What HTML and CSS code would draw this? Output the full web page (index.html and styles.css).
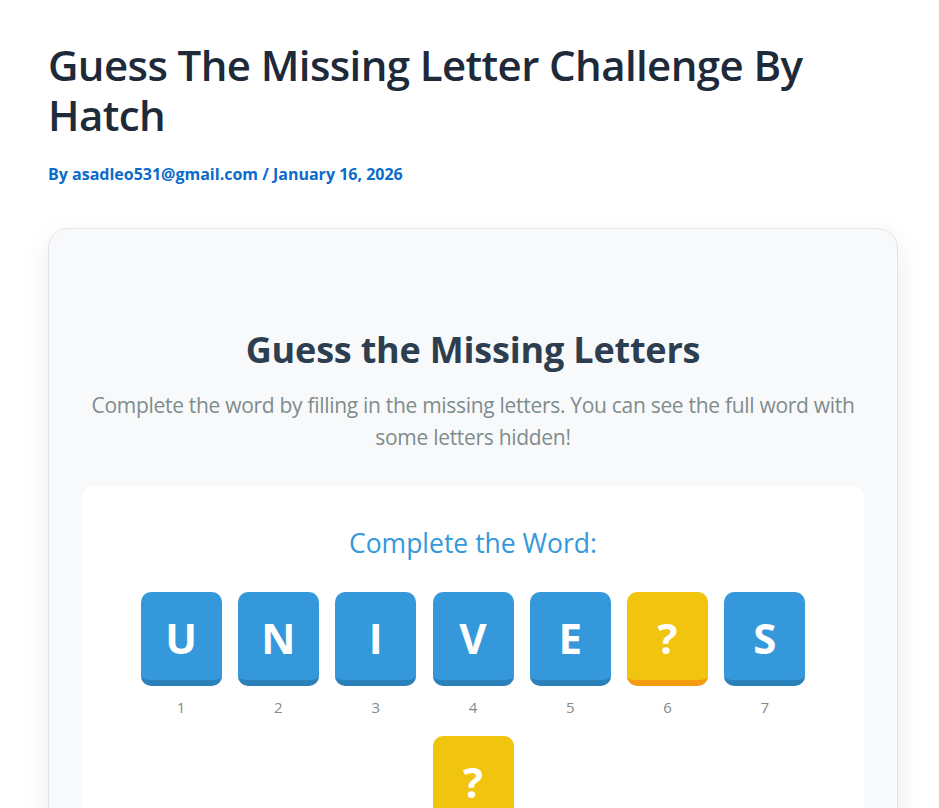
FILE: index.html
```html
<!DOCTYPE html>
<html lang="en">
<head>
<meta charset="utf-8">
<title>Guess The Missing Letter Challenge By Hatch</title>
<link rel="stylesheet" href="styles.css">
</head>
<body>
<main class="page">
  <header class="entry-header">
    <h1 class="entry-title">Guess The Missing Letter Challenge By Hatch</h1>
    <div class="entry-meta">By asadleo531@gmail.com / January 16, 2026</div>
  </header>
  <section class="game-card">
    <h2 class="game-title">Guess the Missing Letters</h2>
    <p class="game-desc">Complete the word by filling in the missing letters. You can see the full word with some letters hidden!</p>
    <div class="word-panel">
      <h3 class="word-label">Complete the Word:</h3>
      <div class="tiles">
        <div class="tile-item"><div class="tile">U</div><span class="tile-num">1</span></div>
        <div class="tile-item"><div class="tile">N</div><span class="tile-num">2</span></div>
        <div class="tile-item"><div class="tile">I</div><span class="tile-num">3</span></div>
        <div class="tile-item"><div class="tile">V</div><span class="tile-num">4</span></div>
        <div class="tile-item"><div class="tile">E</div><span class="tile-num">5</span></div>
        <div class="tile-item"><div class="tile tile-missing">?</div><span class="tile-num">6</span></div>
        <div class="tile-item"><div class="tile">S</div><span class="tile-num">7</span></div>
        <div class="tile-item"><div class="tile tile-missing">?</div><span class="tile-num">8</span></div>
      </div>
    </div>
  </section>
</main>
</body>
</html>
```
FILE: styles.css
```css
* { box-sizing: border-box; }
html, body { margin: 0; padding: 0; background: #ffffff; }
body {
  font-family: "Open Sans", "Noto Sans", sans-serif;
  color: #1e293b;
}
.page {
  padding: 40px 41px 40px 48px;
}
.entry-title {
  margin: 0;
  font-size: 42px;
  line-height: 50px;
  font-weight: 600;
  color: #1e2939;
  letter-spacing: -0.6px;
}
.entry-meta {
  margin-top: 22px;
  font-size: 16px;
  line-height: 24px;
  font-weight: 700;
  color: #0b6bcb;
}
.game-card {
  margin-top: 42px;
  background: #f8f9fa;
  border: 1px solid #e2e4e7;
  border-radius: 20px;
  box-shadow: 0 10px 30px rgba(0, 0, 0, 0.08);
  padding: 99px 33px 40px;
  text-align: center;
}
.game-title {
  margin: 0;
  font-size: 36px;
  line-height: 44px;
  font-weight: 700;
  color: #2c3e50;
  letter-spacing: -0.2px;
}
.game-desc {
  margin: 17px 0 0;
  font-size: 21px;
  line-height: 32px;
  color: #7f8c8d;
  letter-spacing: -0.3px;
}
.word-panel {
  margin-top: 33px;
  background: #ffffff;
  border-radius: 12px;
  padding: 39px 40px 40px;
}
.word-label {
  margin: 0;
  font-size: 26.5px;
  line-height: 36px;
  font-weight: 500;
  color: #3498db;
}
.tiles {
  margin-top: 31px;
  display: flex;
  flex-wrap: wrap;
  justify-content: center;
  column-gap: 16.3px;
  row-gap: 19px;
}
.tile-item {
  display: flex;
  flex-direction: column;
  align-items: center;
  width: 81px;
}
.tile {
  width: 81px;
  height: 94px;
  border-radius: 10px;
  background: #3498db;
  border-bottom: 6px solid #2a80b9;
  color: #ffffff;
  font-size: 42px;
  font-weight: 700;
  display: flex;
  align-items: center;
  justify-content: center;
  padding-top: 3px;
}
.tile-missing {
  background: #f1c40f;
  border-bottom-color: #f39c12;
}
.tile-num {
  margin-top: 11px;
  font-size: 15px;
  line-height: 20px;
  color: #7f8c8d;
}
```
